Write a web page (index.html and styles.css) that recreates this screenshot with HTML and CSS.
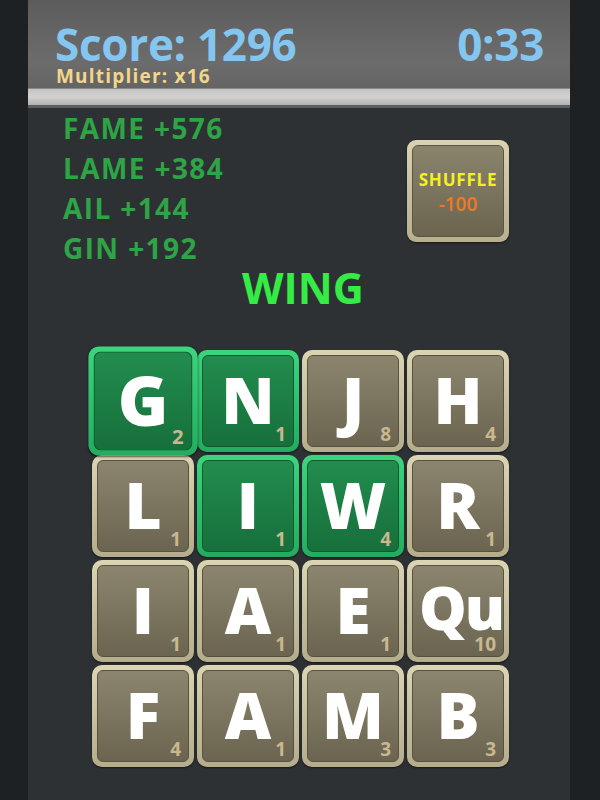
FILE: index.html
```html
<!doctype html>
<html lang="en">
<head>
    <meta http-equiv="Content-Type" content="text/html; charset=utf-8"/>
    <title>Word Grid</title>
    <link rel="stylesheet" href="styles.css">
</head>
<body>
    <div class="game">
        <div class="top">
            <div class="score-row">
                <span class="score">Score: 1296</span>
                <span class="time">0:33</span>
            </div>
            <div class="multi">Multiplier: x16</div>
        </div>
        <div class="bar"></div>

        <div class="info">
            <ul class="words">
                <li>FAME +576</li>
                <li>LAME +384</li>
                <li>AIL +144</li>
                <li>GIN +192</li>
            </ul>
            <div class="shuffle">
                <div class="face">
                    <span class="sh-title">SHUFFLE</span>
                    <span class="sh-cost">-100</span>
                </div>
            </div>
        </div>

        <div class="current">WING</div>

        <div class="board">
            <div class="tile on big"><div class="face"><b>G</b><i>2</i></div></div>
            <div class="tile on"><div class="face"><b>N</b><i>1</i></div></div>
            <div class="tile"><div class="face"><b>J</b><i>8</i></div></div>
            <div class="tile"><div class="face"><b>H</b><i>4</i></div></div>

            <div class="tile"><div class="face"><b>L</b><i>1</i></div></div>
            <div class="tile on"><div class="face"><b>I</b><i>1</i></div></div>
            <div class="tile on"><div class="face"><b>W</b><i>4</i></div></div>
            <div class="tile"><div class="face"><b>R</b><i>1</i></div></div>

            <div class="tile"><div class="face"><b>I</b><i>1</i></div></div>
            <div class="tile"><div class="face"><b>A</b><i>1</i></div></div>
            <div class="tile"><div class="face"><b>E</b><i>1</i></div></div>
            <div class="tile"><div class="face"><b class="qu">Qu</b><i>10</i></div></div>

            <div class="tile"><div class="face"><b>F</b><i>4</i></div></div>
            <div class="tile"><div class="face"><b>A</b><i>1</i></div></div>
            <div class="tile"><div class="face"><b>M</b><i>3</i></div></div>
            <div class="tile"><div class="face"><b>B</b><i>3</i></div></div>
        </div>
    </div>
</body>
</html>
```

FILE: styles.css
```css
* {
    padding: 0;
    margin: 0;
    list-style: none;
    border: 0;
    box-sizing: border-box;
}

body {
    background: #1e2123;
    font-family: "Open Sans", "DejaVu Sans", sans-serif;
    font-weight: 700;
}

.game {
    width: 542px;
    min-height: 800px;
    margin-left: 28px;
    background: #2e3134;
}

/* header */
.top {
    height: 88px;
    padding: 22px 26px 0 27px;
    background: linear-gradient(#5c5c5c, #6c6c6c 70%, #646464);
}

.score-row {
    display: flex;
    justify-content: space-between;
    line-height: 44px;
    height: 44px;
}

.score, .time {
    color: #84c6f0;
    font-size: 44px;
    letter-spacing: -0.3px;
}

.multi {
    color: #f2d68a;
    font-size: 19px;
    line-height: 20px;
    letter-spacing: 1.2px;
    padding-left: 1px;
}

.bar {
    height: 20px;
    border-top: 1px solid #8a8a8a;
    border-bottom: 3px solid #5b5d5f;
    background: linear-gradient(#c4c4c4, #d2d2d2 50%, #b2b2b2);
}

/* words + shuffle */
.info {
    display: flex;
    justify-content: space-between;
    padding: 0 61px 0 35px;
    height: 155px;
}

.words li {
    color: #2ea447;
    font-size: 28px;
    line-height: 40px;
    letter-spacing: 1.4px;
}

.shuffle {
    margin-top: 32px;
    width: 102px;
    height: 102px;
    padding: 5px;
    border-radius: 9px;
    background: linear-gradient(#d9d3b2, #b7af8e);
    box-shadow: 0 1px 2px rgba(0, 0, 0, 0.5);
}

.shuffle .face {
    height: 100%;
    border-radius: 6px;
    border: 1px solid #5b5542;
    background: linear-gradient(#8b846d, #6b644f);
    display: flex;
    flex-direction: column;
    align-items: center;
    justify-content: center;
    padding-top: 2px;
}

.sh-title {
    color: #f4f21c;
    font-size: 17px;
    line-height: 24px;
    letter-spacing: 0.8px;
}

.sh-cost {
    color: #f07a22;
    font-size: 19px;
    line-height: 24px;
    font-weight: 600;
}

.current {
    text-align: center;
    color: #35ec45;
    font-size: 43px;
    line-height: 50px;
    padding-left: 8px;
    height: 87px;
}

/* board */
.board {
    display: grid;
    grid-template-columns: repeat(4, 102px);
    grid-auto-rows: 102px;
    gap: 3px;
    width: 417px;
    margin-left: 64px;
}

.tile {
    padding: 5px;
    border-radius: 10px;
    background: linear-gradient(#dbd5b4, #b4ac8b);
    box-shadow: 0 1px 2px rgba(0, 0, 0, 0.6);
}

.tile .face {
    position: relative;
    height: 100%;
    border-radius: 6px;
    border: 1px solid #57513f;
    background: linear-gradient(#8c856e, #6b6450);
    display: flex;
    align-items: center;
    justify-content: center;
}

.tile.on {
    background: linear-gradient(#3cd57e, #22ad5e);
}

.tile.on .face {
    border-color: #0f5a2e;
    background: linear-gradient(#228d4e, #176f3b);
}

.tile.big {
    transform: scale(1.07);
}

.tile b {
    color: #fff;
    font-size: 64px;
    line-height: 48px;
    margin-top: -2px;
}

.tile b.qu {
    font-size: 60px;
    letter-spacing: -2px;
    margin-left: -10px;
    margin-right: -16px;
    margin-top: -8px;
}

.tile i {
    position: absolute;
    right: 7px;
    bottom: 2px;
    font-style: normal;
    color: #c9b88e;
    font-size: 19px;
    line-height: 20px;
}
```
